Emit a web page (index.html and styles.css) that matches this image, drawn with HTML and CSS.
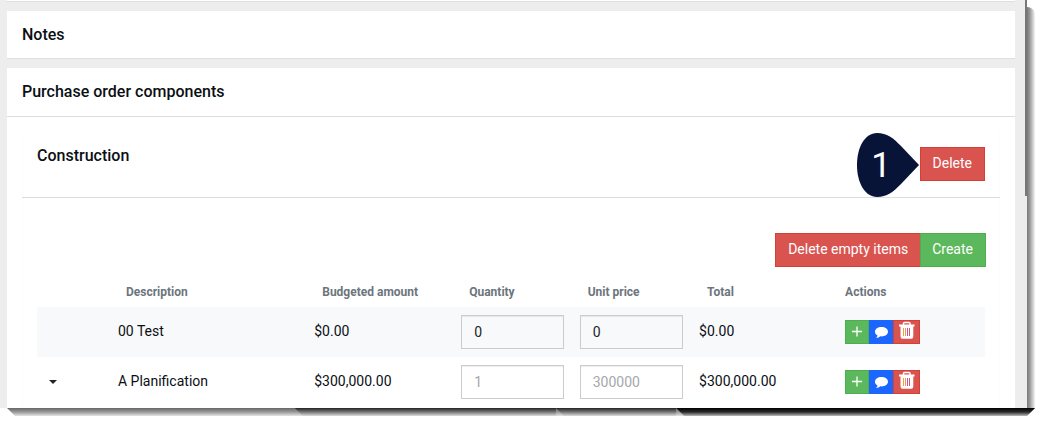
FILE: index.html
```html
<!DOCTYPE html>
<html lang="en">
<head>
<meta charset="utf-8">
<title>Purchase order</title>
<link rel="stylesheet" href="styles.css">
</head>
<body>
<svg class="defs" aria-hidden="true">
  <symbol id="plus" viewBox="0 0 24 24"><path d="M7 11.500H17M12 6.500V16.500" fill="none" stroke="currentColor" stroke-width="1.300"/></symbol>
  <symbol id="comment" viewBox="0 0 24 24"><path d="M12.500 7C8.900 7 6 9 6 11.700c0 1.600 1 2.900 2.500 3.800-.1 1-.6 1.800-1.400 2.600 1.700-.1 3.100-.8 4.100-1.800.4.100.9.100 1.300.1 3.600 0 6.500-2 6.500-4.700S16.100 7 12.500 7z" fill="currentColor"/></symbol>
  <symbol id="trash" viewBox="0 0 24 24"><path d="M8.500 5V3.500Q8.500 2.500 9.500 2.500H14Q15 2.500 15 3.500V5" fill="none" stroke="currentColor" stroke-width="1.500"/><path d="M4 4.500H19.500V6.500H18.300V16.500Q18.300 18.700 16.300 18.700H7.500Q5.500 18.700 5.500 16.500V6.500H4z" fill="currentColor"/><path d="M8.500 8V16M10.500 8V16" stroke="#e8a04d" stroke-width="1"/><path d="M12.500 8V16M14.500 8V16" stroke="#d9537f" stroke-width="1"/></symbol>
</svg>
<div class="window">
  <main class="page">
    <section class="card card-previous"></section>
    <section class="card"><h2 class="card-title">Notes</h2></section>
    <section class="card card-main">
      <h2 class="card-title card-title-ruled">Purchase order components</h2>
      <div class="component">
        <header class="component-header">
          <h3 class="component-title">Construction</h3>
          <div class="callout-anchor">
            <button class="btn btn-danger" type="button">Delete</button>
            <div class="callout">
              <svg class="callout-shape" viewBox="0 0 62 64" aria-hidden="true"><path d="M20 0C30 0 36 5 44 13L62 32 44 51C36 59 30 64 20 64 8 64 0 50 0 32S8 0 20 0z" fill="#071438"/></svg>
              <span class="callout-number">1</span>
            </div>
          </div>
        </header>
        <div class="component-body">
          <div class="toolbar"><button class="btn btn-danger" type="button">Delete empty items</button><button class="btn btn-joined btn-success" type="button">Create</button></div>
          <table class="items">
            <colgroup><col class="col-toggle"><col class="col-description"><col class="col-budget"><col class="col-quantity"><col class="col-price"><col class="col-total"><col class="col-actions"></colgroup>
            <thead>
              <tr><td></td><th>Description</th><th>Budgeted amount</th><th>Quantity</th><th>Unit price</th><th>Total</th><th class="actions-heading">Actions</th></tr>
            </thead>
            <tbody>
              <tr class="striped">
                <td></td><td>00 Test</td><td>$0.00</td>
                <td><input class="field" type="text" value="0" aria-label="Quantity for 00 Test"></td>
                <td><input class="field" type="text" value="0" aria-label="Unit price for 00 Test"></td>
                <td>$0.00</td>
                <td><div class="actions"><button class="icon-btn btn-success" type="button" aria-label="Add"><svg class="icon"><use href="#plus"/></svg></button><button class="icon-btn btn-primary" type="button" aria-label="Comment"><svg class="icon"><use href="#comment"/></svg></button><button class="icon-btn icon-btn-wide btn-danger" type="button" aria-label="Delete"><svg class="icon"><use href="#trash"/></svg></button></div></td>
              </tr>
              <tr>
                <td><button class="toggle" type="button" aria-label="Expand"><svg class="caret" viewBox="0 0 8 4"><path d="M0 0H8L4 4z" fill="#212529"/></svg></button></td><td>A Planification</td><td>$300,000.00</td>
                <td><input class="field" type="text" placeholder="1" aria-label="Quantity for A Planification"></td>
                <td><input class="field" type="text" placeholder="300000" aria-label="Unit price for A Planification"></td>
                <td>$300,000.00</td>
                <td><div class="actions"><button class="icon-btn btn-success" type="button" aria-label="Add"><svg class="icon"><use href="#plus"/></svg></button><button class="icon-btn btn-primary" type="button" aria-label="Comment"><svg class="icon"><use href="#comment"/></svg></button><button class="icon-btn icon-btn-wide btn-danger" type="button" aria-label="Delete"><svg class="icon"><use href="#trash"/></svg></button></div></td>
              </tr>
            </tbody>
          </table>
        </div>
      </div>
    </section>
  </main>
  <div class="scrollbar"><div class="scroll-thumb"></div></div>
  <div class="shade-right"></div>
  <div class="shade-bottom"><span class="shade shade-a"></span><span class="shade shade-b"></span><span class="shade shade-c"></span><span class="shade shade-d"></span></div>
</div>
</body>
</html>
```
FILE: styles.css
```css
* { box-sizing: border-box; }
body { margin: 0; background: #fff; color: #0b0f14; font: 14px/20px Roboto, sans-serif; overflow: hidden; }
button, input { font: inherit; }
button { cursor: pointer; }
h2, h3 { margin: 0; font-size: 16px; font-weight: 500; line-height: 20px; }
.defs { position: absolute; width: 0; height: 0; }

.window { display: grid; grid-template-columns: 1fr 2px 8px; margin-right: 7px; }
.page { background: #ededed; padding: 0 10px 0 7px; display: grid; gap: 9px; }
.card { background: #fff; border-bottom: 1px solid #dfe0e0; }
.card-previous { height: 2px; }
.card-main { border-bottom: 0; padding-bottom: 1px; }
.card-title { padding: 14px 15px 13px; }
.card-title-ruled { padding-bottom: 14px; border-bottom: 1px solid #dcdddd; }
.component { margin: 15px 15px 0; border: 1px solid #fcfcfc; border-width: 0 1px; }
.component-header { display: flex; justify-content: space-between; margin: 0 -1px; padding: 15px 15px 16px; border-bottom: 1px solid #dcdddd; }
.component-title { line-height: 18px; }
.component-body { padding: 35px 14px 0; }

.btn { height: 34px; padding: 0 12px 2px; border: 1px solid; }
.icon-btn { display: flex; align-items: center; justify-content: center; width: 24px; height: 24px; padding: 0; border: 1px solid; }
.icon-btn-wide { width: 27px; }
.btn-joined { margin-left: -1px; padding-left: 11px; }
.btn-danger { background: #d9534f; border-color: #d43f3a; color: #fff; }
.btn-success { background: #5cb85c; border-color: #4cae4c; color: #fff; }
.btn-primary { background: #1a66ff; border-color: #1a66ff; color: #fff; }
.toolbar { display: flex; justify-content: flex-end; margin-right: -1px; }

.callout-anchor { position: relative; }
.callout { position: absolute; right: 100%; top: -14px; width: 63px; height: 64px; }
.callout-shape { display: block; width: 62px; height: 64px; }
.callout-number { position: absolute; inset: 0 14px 0 0; text-align: center; color: #fff; font: 35px/66px Roboto, sans-serif; }

.items { width: 100%; table-layout: fixed; border-collapse: collapse; }
.col-toggle { width: 73px; }
.col-description { width: 20.7%; }
.col-budget { width: 15.5%; }
.col-quantity { width: 12.5%; }
.col-price { width: 12.6%; }
.col-total { width: 15.4%; }
.items th { height: 40px; padding: 10px 16px 0; font-size: 12px; font-weight: 700; text-align: left; color: #6c757d; white-space: nowrap; }
.items .actions-heading { padding-left: 8px; }
.items td { padding: 0 8px 2px; }
.items td:has(.field), .items td:has(.actions), .items td:has(.toggle) { padding-bottom: 0; }
.items tbody tr { height: 50px; }
.striped { background: #f8f9fb; }
.field { display: block; width: 100%; height: 34px; padding: 0 12px; border: 1px solid #ccc; border-radius: 0; background: transparent; color: #212529; box-shadow: inset 0 1px 1px rgba(0, 0, 0, .075); }
.field::placeholder { color: #a5a8ab; opacity: 1; }
.actions { display: flex; }
.icon { flex: none; width: 24px; height: 24px; }
.toggle { display: flex; padding: 4px; border: 0; background: none; }
.caret { width: 8px; height: 4px; }

.scrollbar { background: #ededed; }
.scroll-thumb { height: 196px; background: #777; }
.shade-right { margin-top: 7px; border-top-right-radius: 8px; background: linear-gradient(to right, #777, #999 35%, #d0d0d0 75%, #f4f4f4); }
.shade-bottom { grid-column: 1 / -1; display: flex; height: 8px; margin-left: 7px; background: linear-gradient(#666, #999 50%, #e5e5e5); clip-path: polygon(0 0, 100% 0, calc(100% - 8px) 100%, 8px 100%); }
.shade { clip-path: polygon(0 0, 100% 0, 100% 100%, 8px 100%); }
.shade-a { width: 28%; }
.shade-b { width: 25.4%; background: linear-gradient(#222, #777 50%, #ddd); }
.shade-c { width: 11.7%; background: linear-gradient(#222, #777 50%, #ddd); }
.shade-d { flex: 1; background: linear-gradient(#000, #2a2a2a 50%, #bbb); }
```
